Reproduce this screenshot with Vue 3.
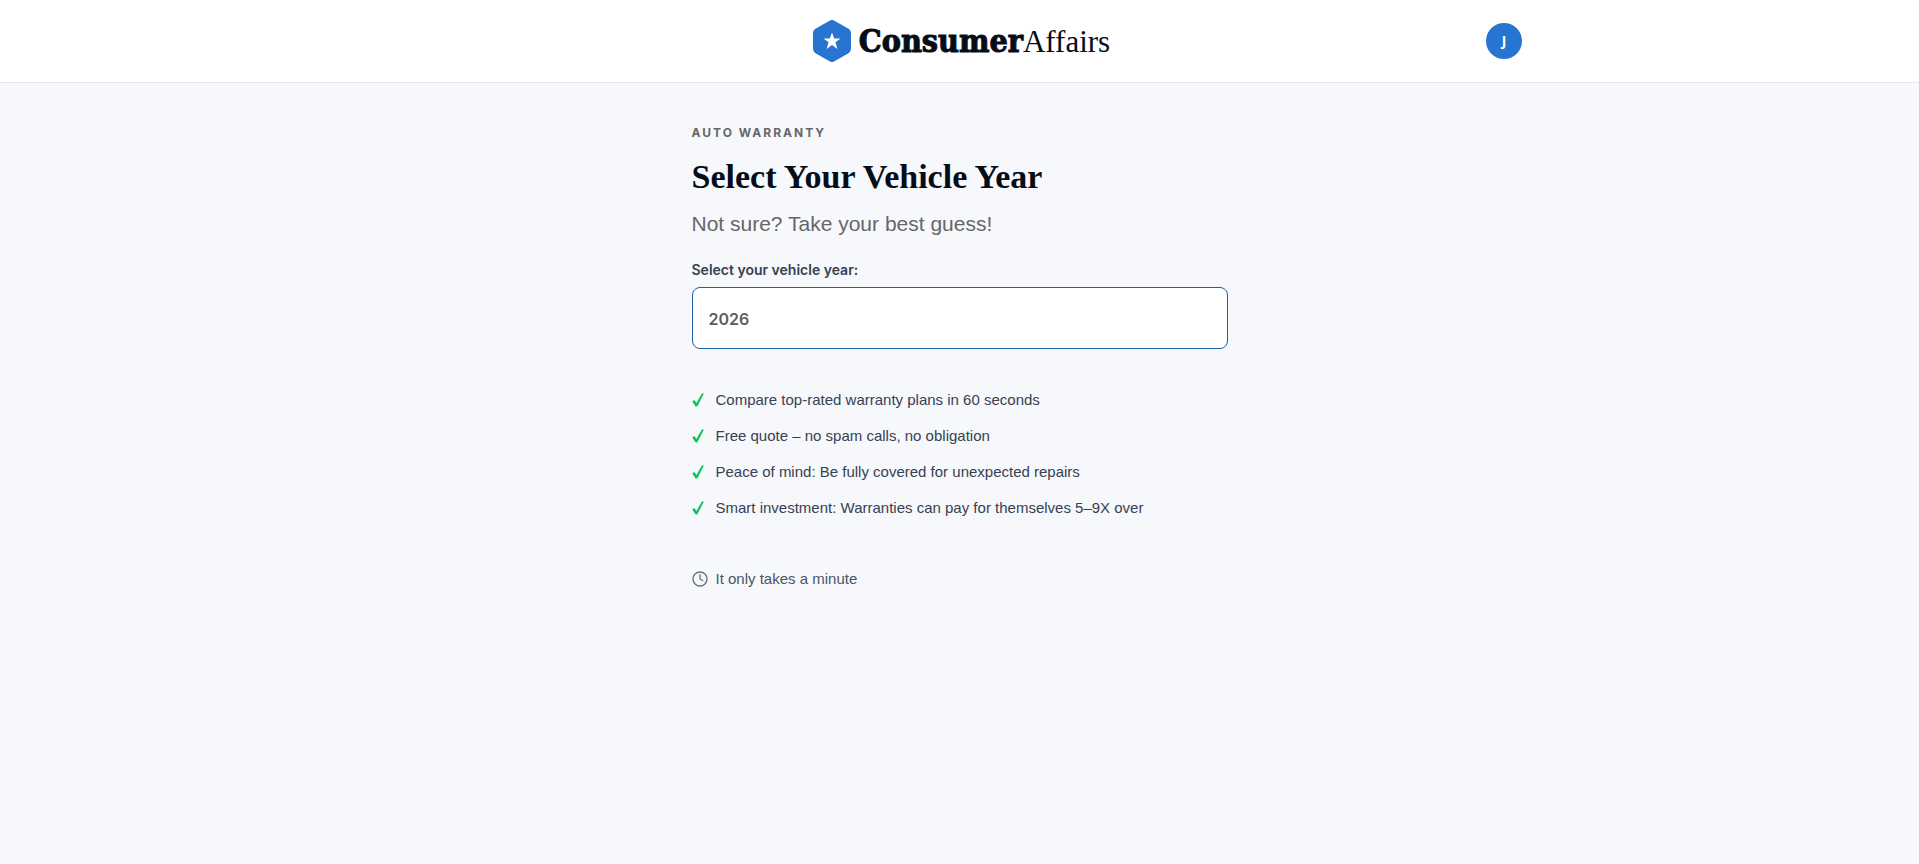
<script setup>
import { ref } from 'vue'

const year = ref('2026')
const benefits = [
  'Compare top-rated warranty plans in 60 seconds',
  'Free quote – no spam calls, no obligation',
  'Peace of mind: Be fully covered for unexpected repairs',
  'Smart investment: Warranties can pay for themselves 5–9X over'
]
</script>

<template>
  <div class="page">
    <header class="header">
      <div class="bar">
        <a class="brand" href="#" aria-label="ConsumerAffairs">
          <svg class="mark" viewBox="0 0 38 42" aria-hidden="true">
            <path d="M16.6.65a4.8 4.8 0 0 1 4.8 0l14.2 8.1A4.8 4.8 0 0 1 38 12.9v16.2a4.8 4.8 0 0 1-2.4 4.15l-14.2 8.1a4.8 4.8 0 0 1-4.8 0l-14.2-8.1A4.8 4.8 0 0 1 0 29.1V12.9a4.8 4.8 0 0 1 2.4-4.15z" fill="#2874d1" />
            <path d="M19 12.4l2.2 6h6.3l-5 3.9 1.9 6.6-5.4-3.9-5.4 3.9 1.9-6.6-5-3.9h6.3z" fill="#fff" />
          </svg>
          <span class="word"><span class="heavy">Consumer</span><span class="light">Affairs</span></span>
        </a>
        <button class="avatar" type="button" aria-label="Account J">J</button>
      </div>
    </header>

    <main class="content">
      <p class="eyebrow">AUTO WARRANTY</p>
      <h1 class="title">Select Your Vehicle Year</h1>
      <p class="subtitle">Not sure? Take your best guess!</p>

      <label class="label" for="vehicle-year">Select your vehicle year:</label>
      <input id="vehicle-year" v-model="year" class="field" type="text" inputmode="numeric" />

      <ul class="benefits">
        <li v-for="item in benefits" :key="item" class="benefit">
          <svg class="check" viewBox="0 0 12 14" aria-hidden="true">
            <path d="M.2 8.4l2.1-1.3 2.1 3L9.9.5h2L5.3 13.5H3.7z" fill="#0bc45c" />
          </svg>
          <span>{{ item }}</span>
        </li>
      </ul>

      <p class="note">
        <svg class="clock" viewBox="0 0 16 16" fill="none" stroke="#6b7280" aria-hidden="true">
          <circle cx="8" cy="8" r="7" stroke-width="1.4" />
          <path d="M8 3.6V8l2.8 1.5" stroke-width="1.3" stroke-linecap="round" stroke-linejoin="round" />
        </svg>
        <span>It only takes a minute</span>
      </p>
    </main>
  </div>
</template>

<style>
body {
  margin: 0;
  background: #f7f8fc;
}
</style>

<style scoped>
.page {
  min-height: 100vh;
  background: #f7f8fc;
  color: #364153;
  font-family: "Liberation Sans", Arial, sans-serif;
  font-size: 15px;
  line-height: 20px;
}

.header {
  background: #fff;
  border-bottom: 1px solid #e5e7eb;
}

.bar {
  display: grid;
  grid-template-columns: 1fr auto 1fr;
  align-items: center;
  max-width: 1125px;
  height: 82px;
  margin: 0 auto;
}

.brand {
  grid-column: 2;
  display: flex;
  align-items: center;
  gap: 8px;
  padding-left: 4px;
  color: #050d18;
  text-decoration: none;
}

.mark {
  width: 38px;
  height: 42px;
}

.word {
  display: flex;
  align-items: baseline;
  line-height: 42px;
}

.heavy {
  font-family: "DejaVu Serif Condensed", "DejaVu Serif", serif;
  font-size: 32px;
  font-weight: 700;
  -webkit-text-stroke: 1px #050d18;
}

.light {
  font-family: "Liberation Serif", "Times New Roman", serif;
  font-size: 31px;
}

.avatar {
  grid-column: 3;
  justify-self: end;
  width: 36px;
  height: 36px;
  padding: 0;
  border: 0;
  border-radius: 50%;
  background: #2874d1;
  color: #fff;
  font: 700 14px/36px "Noto Sans", sans-serif;
}

.content {
  max-width: 536px;
  margin: 0 auto;
  padding-top: 40px;
}

.eyebrow {
  margin: 0;
  color: #666;
  font-family: Inter, sans-serif;
  font-size: 12px;
  font-weight: 700;
  letter-spacing: 2px;
}

.title {
  margin: 12px 0 0;
  color: #050d18;
  font-family: "Liberation Serif", "Times New Roman", serif;
  font-size: 34px;
  font-weight: 700;
  line-height: 44px;
}

.subtitle {
  margin: 11px 0 0;
  color: #666;
  font-size: 21px;
  line-height: 28px;
}

.label {
  display: block;
  margin-top: 22px;
  font-family: Inter, sans-serif;
  font-size: 14px;
  font-weight: 600;
}

.field {
  display: block;
  box-sizing: border-box;
  width: 100%;
  height: 62px;
  margin-top: 7px;
  padding: 2px 16px 0;
  border: 1px solid #1b5faa;
  border-radius: 8px;
  outline: 0;
  background: #fff;
  color: #5c5c5c;
  font: 600 16px/24px Inter, sans-serif;
}

.benefits {
  display: grid;
  gap: 16px;
  margin: 41px 0 0;
  padding: 0;
  list-style: none;
}

.benefit {
  display: flex;
  align-items: center;
  gap: 12px;
}

.check {
  width: 12px;
  height: 14px;
}

.note {
  display: flex;
  align-items: center;
  gap: 8px;
  margin: 51px 0 0;
  color: #4a5565;
}

.clock {
  width: 16px;
  height: 16px;
}
</style>
